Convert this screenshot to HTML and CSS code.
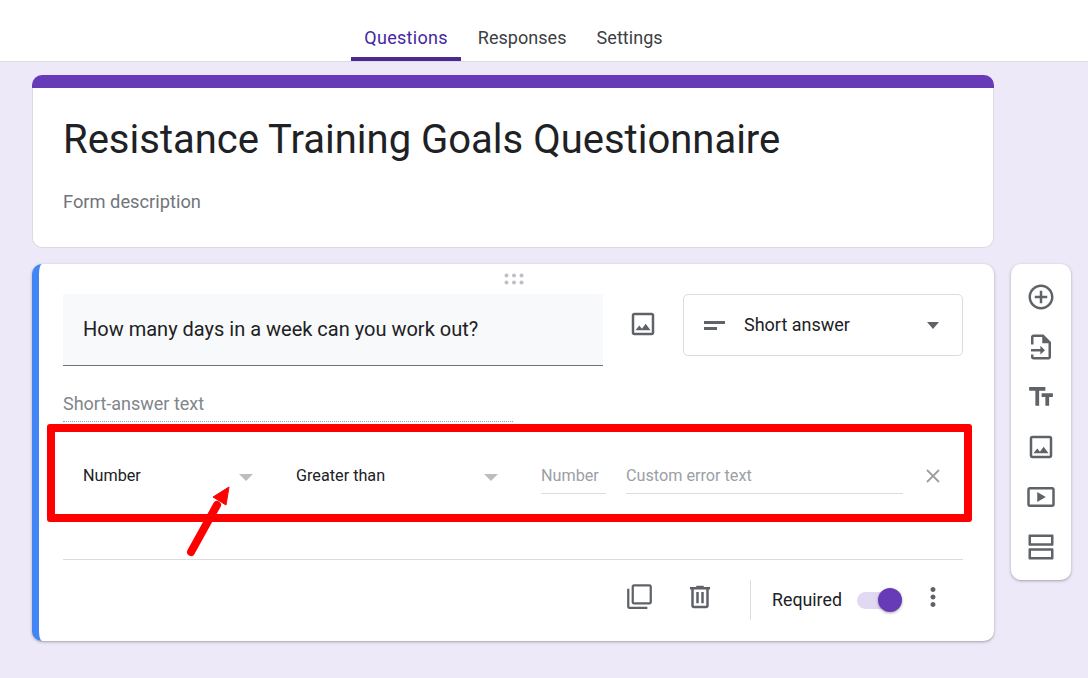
FILE: index.html
```html
<!DOCTYPE html>
<html lang="en">
<head>
<meta charset="utf-8">
<title>Resistance Training Goals Questionnaire</title>
<link rel="stylesheet" href="styles.css">
</head>
<body>
<header class="topbar">
  <nav class="tabs">
    <a class="tab tab-active">Questions</a>
    <a class="tab">Responses</a>
    <a class="tab">Settings</a>
  </nav>
</header>
<main class="page">
  <div class="form-col">
    <section class="title-card">
      <div class="title-band"></div>
      <div class="title-body">
        <h1 class="form-title">Resistance Training Goals Questionnaire</h1>
        <p class="form-desc">Form description</p>
      </div>
    </section>
    <section class="q-card">
      <div class="drag">
        <svg width="20" height="12" viewBox="0 0 20 12"><g class="dots"><circle cx="2.5" cy="2.5" r="2"/><circle cx="10" cy="2.5" r="2"/><circle cx="17.5" cy="2.5" r="2"/><circle cx="2.5" cy="9.5" r="2"/><circle cx="10" cy="9.5" r="2"/><circle cx="17.5" cy="9.5" r="2"/></g></svg>
      </div>
      <div class="q-top">
        <div class="q-field">How many days in a week can you work out?</div>
        <div class="q-image">
          <svg class="icon" viewBox="0 0 24 24"><path d="M19 5v14H5V5h14m0-2H5c-1.1 0-2 .9-2 2v14c0 1.1.9 2 2 2h14c1.1 0 2-.9 2-2V5c0-1.1-.9-2-2-2zm-4.86 8.86l-3 3.87L9 13.14 6 17h12l-3.86-5.14z"/></svg>
        </div>
        <div class="q-type">
          <span class="short-lines"><i class="line-long"></i><i class="line-short"></i></span>
          <span class="q-type-label">Short answer</span>
          <span class="caret caret-dark"></span>
        </div>
      </div>
      <div class="short-text">Short-answer text</div>
      <div class="rule-row">
        <div class="rule-select rule-first"><span>Number</span><i class="caret caret-light"></i></div>
        <div class="rule-select rule-second"><span>Greater than</span><i class="caret caret-light"></i></div>
        <div class="rule-input rule-num">Number</div>
        <div class="rule-input rule-err">Custom error text</div>
        <svg class="rule-x" width="16" height="16" viewBox="0 0 16 16"><path d="M2 2l12 12M14 2L2 14"/></svg>
      </div>
      <div class="q-foot">
        <svg class="icon icon-copy" viewBox="0 0 24 24"><path d="M3 5H1v16c0 1.1.9 2 2 2h16v-2H3V5zm18-4H7c-1.1 0-2 .9-2 2v14c0 1.1.9 2 2 2h14c1.1 0 2-.9 2-2V3c0-1.1-.9-2-2-2zm0 16H7V3h14v14z"/></svg>
        <svg class="icon icon-trash" viewBox="0 0 24 24"><path d="M15 4V3H9v1H4v2h1v13c0 1.1.9 2 2 2h10c1.1 0 2-.9 2-2V6h1V4h-5zm2 15H7V6h10v13zM9 8h2v9H9zm4 0h2v9h-2z"/></svg>
        <span class="foot-sep"></span>
        <span class="req-label">Required</span>
        <span class="toggle"><i class="thumb"></i></span>
        <svg class="icon icon-more" viewBox="0 0 24 24"><path d="M12 8c1.1 0 2-.9 2-2s-.9-2-2-2-2 .9-2 2 .9 2 2 2zm0 2c-1.1 0-2 .9-2 2s.9 2 2 2 2-.9 2-2-.9-2-2-2zm0 6c-1.1 0-2 .9-2 2s.9 2 2 2 2-.9 2-2-.9-2-2-2z"/></svg>
      </div>
      <div class="red-box"></div>
      <svg class="red-arrow" width="60" height="80" viewBox="0 0 60 80"><path class="arrow-shaft" d="M9 72L35 25"/><path class="arrow-head" d="M47 7L31 17L44 25z"/></svg>
    </section>
  </div>
  <aside class="side">
    <div class="side-btn"><svg class="icon" viewBox="0 0 24 24"><path d="M13 7h-2v4H7v2h4v4h2v-4h4v-2h-4V7zm-1-5C6.48 2 2 6.48 2 12s4.48 10 10 10 10-4.48 10-10S17.52 2 12 2zm0 18c-4.41 0-8-3.59-8-8s3.59-8 8-8 8 3.59 8 8-3.59 8-8 8z"/></svg></div>
    <div class="side-btn"><svg class="icon" viewBox="0 0 24 24"><path d="M6 2h8l6 6v12c0 1.1-.9 2-2 2H6c-1.1 0-2-.9-2-2v-2h2v2h12V9h-5V4H6v6H4V4c0-1.1.9-2 2-2z"/><path d="M4 13.5h7.5V11l3.7 3.5-3.7 3.5v-2.5H4z"/></svg></div>
    <div class="side-btn"><svg class="icon" viewBox="0 0 24 24"><path d="M2.5 4v3h5v12h3V7h5V4h-13zm19 5h-9v3h3v7h3v-7h3V9z"/></svg></div>
    <div class="side-btn"><svg class="icon" viewBox="0 0 24 24"><path d="M19 5v14H5V5h14m0-2H5c-1.1 0-2 .9-2 2v14c0 1.1.9 2 2 2h14c1.1 0 2-.9 2-2V5c0-1.1-.9-2-2-2zm-4.86 8.86l-3 3.87L9 13.14 6 17h12l-3.86-5.14z"/></svg></div>
    <div class="side-btn"><svg class="icon" viewBox="0 0 24 24"><path d="M3 4h18c1.1 0 2 .9 2 2v12c0 1.1-.9 2-2 2H3c-1.1 0-2-.9-2-2V6c0-1.1.9-2 2-2zm0 2v12h18V6H3z" fill-rule="evenodd"/><path d="M9 8v8l6.8-4z"/></svg></div>
    <div class="side-btn"><svg class="icon" viewBox="0 0 24 24"><path d="M3 2h18c.6 0 1 .4 1 1v7c0 .6-.4 1-1 1H3c-.6 0-1-.4-1-1V3c0-.6.4-1 1-1zm1 2v5h16V4H4zM3 13h18c.6 0 1 .4 1 1v7c0 .6-.4 1-1 1H3c-.6 0-1-.4-1-1v-7c0-.6.4-1 1-1zm1 2v5h16v-5H4z" fill-rule="evenodd"/></svg></div>
  </aside>
</main>
</body>
</html>
```

FILE: styles.css
```css
* { box-sizing: border-box; }
html, body { margin: 0; height: 100%; }
body {
  background: #ede9f8;
  font-family: Roboto, "Liberation Sans", sans-serif;
  color: #202124;
  overflow: hidden;
}
.topbar {
  height: 62px;
  background: #fff;
  border-bottom: 1px solid #dadce0;
  display: flex;
  justify-content: center;
  padding-right: 61px;
}
.tabs { display: flex; gap: 4px; }
.tab {
  height: 61px;
  padding: 27px 13px 0;
  font-size: 18px;
  line-height: 22px;
  letter-spacing: .05px;
  color: #3c4043;
  border-bottom: 4px solid transparent;
}
.tab-active {
  color: #4527a0;
  letter-spacing: .28px;
  border-bottom-color: #4a2a8e;
}
.page {
  display: flex;
  align-items: flex-start;
  gap: 17px;
  padding: 13px 0 0 32px;
}
.form-col {
  width: 962px;
  display: flex;
  flex-direction: column;
  gap: 16px;
}
.title-card {
  height: 173px;
  display: flex;
  flex-direction: column;
}
.title-band { height: 13px; background: #673ab7; border-radius: 10px 10px 0 0; flex: none; }
.title-body {
  flex: 1;
  background: #fff;
  border: 1px solid #dadce0;
  border-top: 0;
  border-radius: 0 0 10px 10px;
  padding: 27px 30px 0;
}
.form-title {
  margin: 0;
  font-size: 40px;
  line-height: 50px;
  font-weight: 400;
}
.form-desc {
  margin: 25px 0 0;
  font-size: 18.3px;
  line-height: 24px;
  color: #70757a;
}
.q-card {
  position: relative;
  height: 377px;
  background: #fff;
  border-left: 7px solid #4285f4;
  border-radius: 10px;
  box-shadow: 0 1px 2px rgba(60,64,67,.3), 0 1px 3px 1px rgba(60,64,67,.1);
  padding: 0 31px 0 24px;
}
.drag { height: 30px; display: flex; justify-content: center; padding: 9px 0 0 1px; }
.dots { fill: #bdc1c6; }
.q-top { display: flex; align-items: flex-start; }
.q-field {
  width: 540px;
  height: 72px;
  background: #f8f9fa;
  border-bottom: 1px solid #70757a;
  padding: 22px 20px 0;
  font-size: 20px;
  line-height: 26px;
}
.icon { width: 30px; height: 30px; fill: #5f6368; display: block; flex: none; }
.q-image { width: 80px; height: 60px; display: flex; align-items: center; justify-content: center; }
.q-type {
  width: 280px;
  height: 62px;
  border: 1px solid #dadce0;
  border-radius: 5px;
  display: flex;
  align-items: center;
  padding: 0 23px 0 20px;
}
.short-lines { display: flex; flex-direction: column; gap: 3px; width: 40px; }
.short-lines i { display: block; height: 3px; background: #5f6368; }
.line-long { width: 21px; }
.line-short { width: 13px; }
.q-type-label { flex: 1; font-size: 18px; line-height: 24px; }
.caret {
  display: block;
  width: 0;
  height: 0;
  border-left: 7px solid transparent;
  border-right: 7px solid transparent;
  border-top: 7px solid #bdbdbd;
}
.caret-dark { border-top-color: #5f6368; border-left-width: 6.5px; border-right-width: 6.5px; }
.short-text {
  width: 450px;
  height: 40px;
  margin-top: 16px;
  padding-top: 10px;
  font-size: 18px;
  line-height: 24px;
  color: #80868b;
  border-bottom: 1px dotted #9aa0a6;
}
.rule-row {
  height: 137px;
  display: flex;
  align-items: flex-start;
  padding-top: 43px;
  font-size: 16.2px;
  line-height: 22px;
}
.rule-select { display: flex; align-items: center; justify-content: space-between; height: 40px; margin-top: -9px; flex: none; }
.rule-first { width: 190px; padding-left: 20px; }
.rule-second { width: 202px; margin-left: 43px; }
.rule-select .caret { margin-top: 3px; }
.rule-input {
  height: 37px;
  margin-top: -8px;
  padding-top: 8px;
  color: #9aa0a6;
  border-bottom: 1px solid #dadce0;
  flex: none;
}
.rule-num { width: 65px; margin-left: 43px; }
.rule-err { width: 277px; margin-left: 20px; }
.rule-x { margin: 3px 0 0 22px; fill: none; stroke: #9e9e9e; stroke-width: 1.8; flex: none; }
.q-foot {
  height: 82px;
  border-top: 1px solid #dadce0;
  display: flex;
  align-items: flex-start;
  padding-top: 20px;
}
.icon-copy { width: 27px; height: 27px; margin-left: 563px; margin-top: 3px; }
.icon-trash { margin-left: 32px; margin-top: 2px; }
.foot-sep { width: 1px; height: 40px; background: #dadce0; margin-left: 35px; }
.req-label { font-size: 17.8px; line-height: 40px; margin-left: 21px; }
.toggle {
  position: relative;
  width: 45px;
  height: 17px;
  margin: 12px 0 0 15px;
  background: #e1d9f2;
  border-radius: 9px;
}
.thumb {
  position: absolute;
  right: 0;
  top: -4px;
  width: 24px;
  height: 24px;
  border-radius: 50%;
  background: #673ab7;
  box-shadow: 0 1px 3px rgba(0,0,0,.35);
}
.icon-more { margin: 2px 0 0 16px; }
.red-box {
  position: absolute;
  left: 8px;
  top: 160px;
  width: 925px;
  height: 98px;
  border: 8px solid #ff0000;
  border-radius: 3px;
  pointer-events: none;
}
.red-arrow { position: absolute; left: 143px; top: 216px; overflow: visible; }
.arrow-shaft { stroke: #ff0000; stroke-width: 8; stroke-linecap: round; fill: none; }
.arrow-head { fill: #ff0000; stroke: #ff0000; stroke-width: 1; }
.side {
  width: 60px;
  margin-top: 189px;
  padding: 8px 0;
  background: #fff;
  border-radius: 10px;
  box-shadow: 0 1px 2px rgba(60,64,67,.3), 0 1px 3px 1px rgba(60,64,67,.1);
  display: flex;
  flex-direction: column;
}
.side-btn { height: 50px; display: flex; align-items: center; justify-content: center; }
```
